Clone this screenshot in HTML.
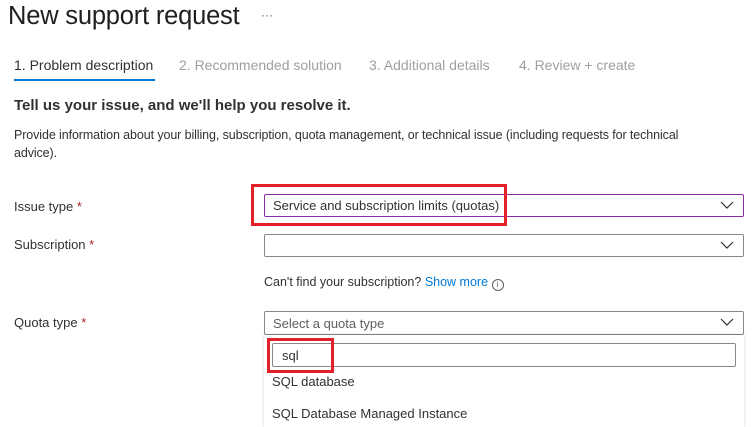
<!DOCTYPE html>
<html><head><meta charset="utf-8"><style>
*{margin:0;padding:0;box-sizing:border-box}
body{width:752px;height:427px;background:#fff;font-family:"Liberation Sans",sans-serif;color:#323130;position:relative;overflow:hidden}
.a{position:absolute;white-space:nowrap}
.box{position:absolute;border:1px solid #8a8886;border-radius:2px;background:#fff}
.chev{position:absolute;right:9px;top:6px}
.red{position:absolute;border:3px solid #e3202a}
.req{color:#a4262c}
</style></head><body>
<div class="a" style="left:8px;top:2px;font-size:25.5px;color:#201f1e;letter-spacing:-0.2px">New support request</div>
<div class="a" style="left:261px;top:8px;font-size:12px;color:#605e5c">···</div>

<div class="a" style="left:14px;top:57px;font-size:14px;color:#323130">1. Problem description</div>
<div class="a" style="left:14px;top:79px;width:141px;height:2px;background:#0078d4"></div>
<div class="a" style="left:179px;top:57px;font-size:14px;color:#a19f9d">2. Recommended solution</div>
<div class="a" style="left:369px;top:57px;font-size:14px;color:#a19f9d">3. Additional details</div>
<div class="a" style="left:519px;top:57px;font-size:14px;color:#a19f9d">4. Review + create</div>

<div class="a" style="left:14px;top:97px;font-size:15px;font-weight:bold;color:#323130">Tell us your issue, and we'll help you resolve it.</div>
<div class="a" style="left:14px;top:126px;font-size:12.5px;line-height:18px;color:#323130;letter-spacing:-0.1px">Provide information about your billing, subscription, quota management, or technical issue (including requests for technical<br>advice).</div>

<div class="a" style="left:14px;top:199px;font-size:13px">Issue type <span class="req">*</span></div>
<div class="a" style="left:14px;top:237px;font-size:13px">Subscription <span class="req">*</span></div>
<div class="a" style="left:14px;top:315px;font-size:13px">Quota type <span class="req">*</span></div>

<div class="box" style="left:264px;top:194px;width:480px;height:23px;border-color:#8a2da5">
 <div class="a" style="left:8px;top:3px;font-size:13px;color:#323130">Service and subscription limits (quotas)</div>
 <svg class="chev" width="14" height="8" viewBox="0 0 14 8"><path d="M1 1l6 6 6-6" fill="none" stroke="#323130" stroke-width="1.2"/></svg>
</div>
<div class="red" style="left:251px;top:184px;width:256px;height:42px"></div>

<div class="box" style="left:264px;top:234px;width:480px;height:23px">
 <svg class="chev" width="14" height="8" viewBox="0 0 14 8"><path d="M1 1l6 6 6-6" fill="none" stroke="#323130" stroke-width="1.2"/></svg>
</div>

<div class="a" style="left:264px;top:275px;font-size:12.5px;color:#323130">Can't find your subscription? <span style="color:#0078d4">Show more</span> <span style="display:inline-block;width:12px;height:12px;border:1px solid #605e5c;border-radius:50%;font-size:8px;line-height:10px;text-align:center;color:#605e5c;vertical-align:-1px">i</span></div>

<div class="box" style="left:264px;top:311px;width:480px;height:24px">
 <div class="a" style="left:8px;top:4px;font-size:13px;color:#605e5c">Select a quota type</div>
 <svg class="chev" width="14" height="8" viewBox="0 0 14 8"><path d="M1 1l6 6 6-6" fill="none" stroke="#323130" stroke-width="1.2"/></svg>
</div>

<div class="a" style="left:264px;top:335px;width:480px;height:92px;background:#fff;box-shadow:0 0 3px rgba(0,0,0,0.2)"></div>
<div class="box" style="left:272px;top:343px;width:464px;height:24px">
 <div class="a" style="left:9px;top:4px;font-size:13px;color:#323130">sql</div>
</div>
<div class="red" style="left:267px;top:338px;width:67px;height:35px"></div>
<div class="a" style="left:272px;top:374px;font-size:13px;color:#323130">SQL database</div>
<div class="a" style="left:272px;top:406px;font-size:13px;color:#323130">SQL Database Managed Instance</div>
</body></html>
